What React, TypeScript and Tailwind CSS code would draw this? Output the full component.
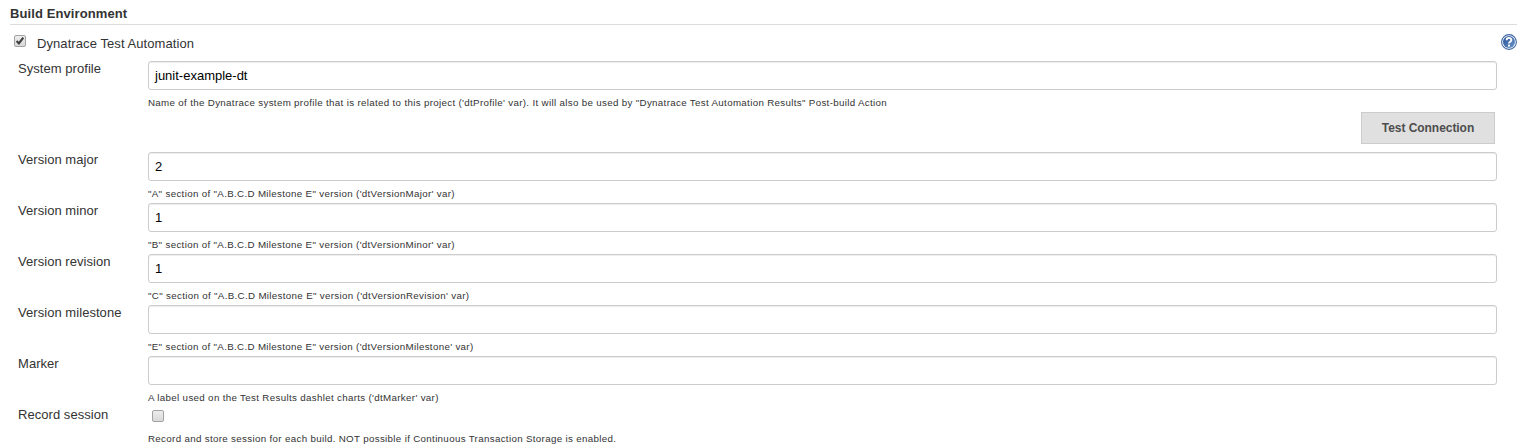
import React from "react";

function Check({ checked }: { checked?: boolean }) {
  return (
    <svg className="block" width="12" height="12" viewBox="0 0 12 12" role="checkbox" aria-checked={!!checked}>
      <defs>
        <linearGradient id="box" x1="0" y1="0" x2="0" y2="1">
          <stop offset="0" stopColor="#eeeeee" />
          <stop offset="1" stopColor="#d8d8d8" />
        </linearGradient>
      </defs>
      <rect x="0.5" y="0.5" width="11" height="11" rx="1.5" fill="url(#box)" stroke="#a3a3a3" />
      {checked && <path d="M2.6 6L4.9 8.4L9.3 2.6" fill="none" stroke="#404040" strokeWidth="2.2" />}
    </svg>
  );
}

function Help() {
  return (
    <svg width="16" height="16" viewBox="0 0 16 16" className="-mt-px block" aria-label="Help">
      <defs>
        <linearGradient id="help" x1="0" y1="0" x2="1" y2="1">
          <stop offset="0" stopColor="#244f94" />
          <stop offset="1" stopColor="#6f98cc" />
        </linearGradient>
      </defs>
      <circle cx="8" cy="8" r="7.4" fill="#fff" stroke="#3f68a5" strokeWidth="1.1" />
      <circle cx="8" cy="8" r="6" fill="url(#help)" />
      <path d="M5.6 6.2C5.6 3.1 10.4 3.2 10.4 6C10.4 7.7 8 7.7 8 9.6" fill="none" stroke="#fff" strokeWidth="1.9" />
      <rect x="7" y="10.6" width="2" height="2" fill="#fff" />
    </svg>
  );
}

function Label({ children }: { children: React.ReactNode }) {
  return <div className="w-[138px] shrink-0 pl-2 text-[13px] leading-[15px] tracking-[0.05px]">{children}</div>;
}

function Hint({ children }: { children: React.ReactNode }) {
  return <div className="h-3 whitespace-nowrap text-[9.75px] leading-3 tracking-[0.33px]">{children}</div>;
}

function Field({ name, value, hint }: { name: string; value: string; hint: string }) {
  return (
    <div className="flex h-[51px]">
      <Label>{name}</Label>
      <div className="mr-5 flex-1">
        <div className="mb-[7px] flex h-[29px] items-center rounded-[3px] border border-[#ccc] px-1.5 text-[13px] text-black shadow-[inset_0_1px_1px_rgba(0,0,0,0.075)]">
          {value}
        </div>
        <Hint>{hint}</Hint>
      </div>
    </div>
  );
}

export default function App() {
  return (
    <div className="h-[447px] overflow-hidden bg-white pt-1.5 pr-[7px] pl-2.5 font-['Liberation_Sans',Arial,sans-serif] text-[#333]">
      <div className="h-[19px] border-b border-[#ddd] text-[13px] leading-[15px] font-bold tracking-[0.1px]">Build Environment</div>
      <div className="flex h-9 pt-[10px] pl-1">
        <Check checked />
        <div className="ml-[11px] flex-1 text-[13px] leading-[17px] tracking-[0.08px]">Dynatrace Test Automation</div>
        <Help />
      </div>
      <Field
        name="System profile"
        value="junit-example-dt"
        hint={`Name of the Dynatrace system profile that is related to this project ('dtProfile' var). It will also be used by "Dynatrace Test Automation Results" Post-build Action`}
      />
      <div className="mb-2 flex h-8 justify-end pr-[22px]">
        <button className="h-8 w-[134px] border border-[#ccc] bg-[#e0e0e0] text-[12px] font-bold tracking-[-0.05px] text-[#4d4d4d]">Test Connection</button>
      </div>
      <Field name="Version major" value="2" hint={`"A" section of "A.B.C.D Milestone E" version ('dtVersionMajor' var)`} />
      <Field name="Version minor" value="1" hint={`"B" section of "A.B.C.D Milestone E" version ('dtVersionMinor' var)`} />
      <Field name="Version revision" value="1" hint={`"C" section of "A.B.C.D Milestone E" version ('dtVersionRevision' var)`} />
      <Field name="Version milestone" value="" hint={`"E" section of "A.B.C.D Milestone E" version ('dtVersionMilestone' var)`} />
      <Field name="Marker" value="" hint="A label used on the Test Results dashlet charts ('dtMarker' var)" />
      <div className="flex">
        <Label>Record session</Label>
        <div>
          <div className="h-[26px] pt-[3px] pl-1"><Check /></div>
          <Hint>Record and store session for each build. NOT possible if Continuous Transaction Storage is enabled.</Hint>
        </div>
      </div>
    </div>
  );
}
